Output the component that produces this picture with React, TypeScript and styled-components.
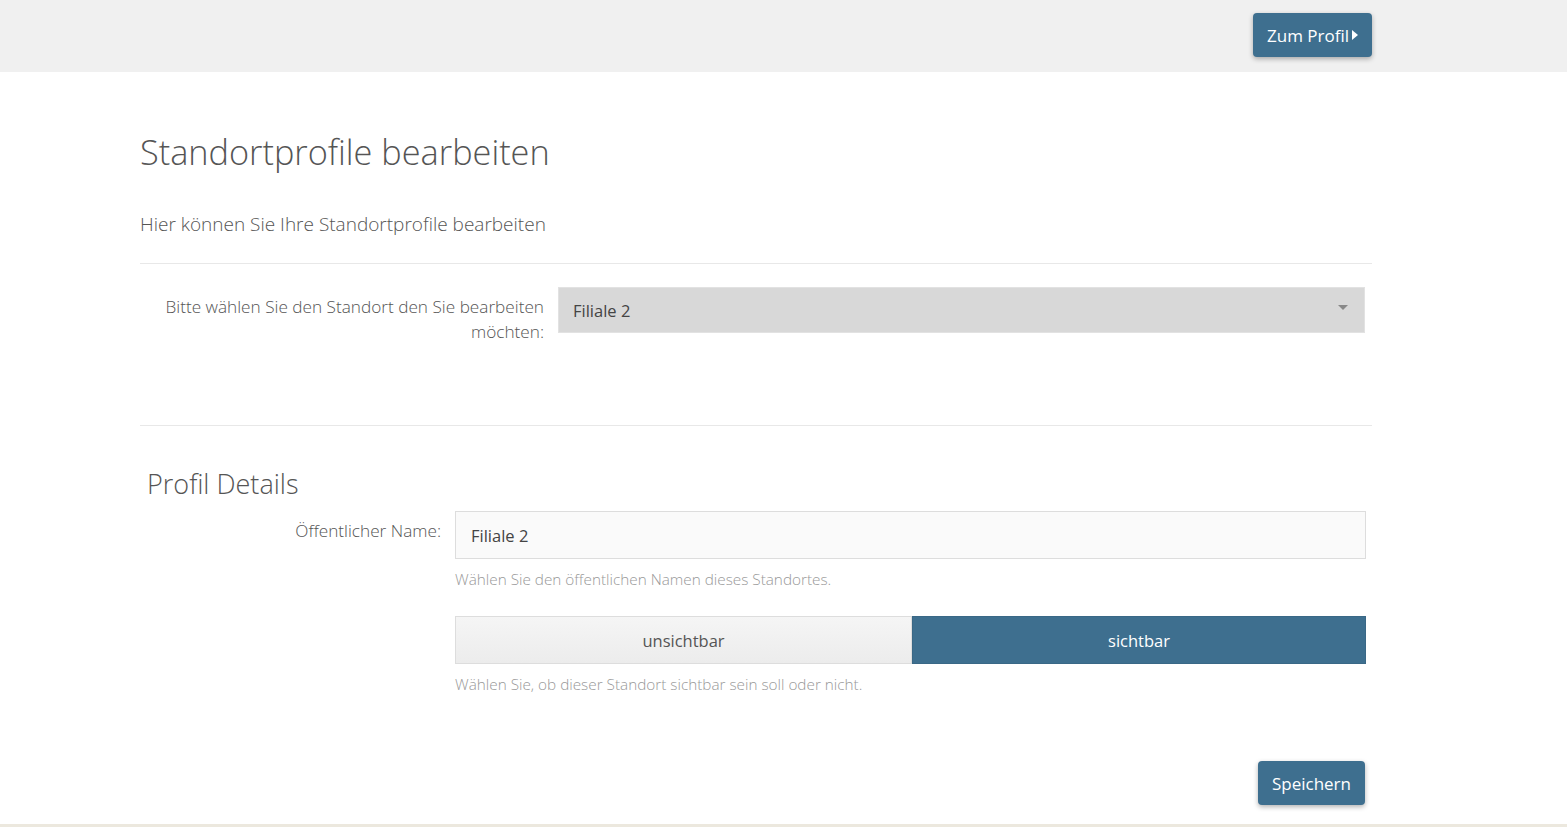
import styled, { createGlobalStyle } from 'styled-components'

const GlobalStyle = createGlobalStyle`
  html, body {
    margin: 0;
    padding: 0;
    background: #fff;
    font-family: "Open Sans", Lato, sans-serif;
    color: #555;
  }
`

const Page = styled.div`
  min-height: 827px;
  display: flex;
  flex-direction: column;
`

const TopBar = styled.header`
  height: 72px;
  box-sizing: border-box;
  background: #f0f0f0;
  display: flex;
  align-items: flex-start;
  justify-content: flex-end;
  padding: 13px 195px 0 0;
`

const PrimaryButton = styled.button`
  background: #3e6f8f;
  color: #fff;
  border: none;
  border-radius: 4px;
  height: 44px;
  padding: 0 14px;
  font-family: inherit;
  font-size: 17px;
  display: flex;
  align-items: center;
  gap: 3px;
  box-shadow: 0 2px 5px rgba(0, 0, 0, 0.3);
  cursor: pointer;
`

const Caret = styled.span`
  width: 0;
  height: 0;
  border-top: 5px solid transparent;
  border-bottom: 5px solid transparent;
  border-left: 6px solid #fff;
`

const Main = styled.main`
  width: 1232px;
  margin: 0 0 0 140px;
  flex: 1;
  display: flex;
  flex-direction: column;
`

const Title = styled.h1`
  font-weight: 300;
  font-size: 34.3px;
  color: #555;
  margin: 58px 0 0;
  line-height: 44px;
`

const Lead = styled.p`
  font-size: 19px;
  font-weight: 300;
  margin: 38px 0 0;
  line-height: 24px;
  color: #555;
`

const Rule = styled.hr<{ $top: number }>`
  border: none;
  border-top: 1px solid #e8e8e8;
  margin: ${(p) => p.$top}px 0 0;
`

const Row = styled.div<{ $label: number; $top: number }>`
  display: grid;
  grid-template-columns: ${(p) => p.$label}px 911px;
  column-gap: 14px;
  margin-top: ${(p) => p.$top}px;
`

const Label = styled.label`
  text-align: right;
  font-size: 17.2px;
  font-weight: 300;
  line-height: 25px;
  color: #555;
  padding-top: 7px;
`

const Select = styled.div`
  width: 807px;
  height: 46px;
  box-sizing: border-box;
  background: #d8d8d8;
  border: 1px solid #e2e2e2;
  display: flex;
  align-items: center;
  justify-content: space-between;
  padding: 0 14px;
  font-size: 16.5px;
  color: #444;
`

const SelectArrow = styled.span`
  width: 0;
  height: 0;
  border-left: 5px solid transparent;
  border-right: 5px solid transparent;
  border-top: 5px solid #888;
  margin-right: 2px;
  margin-top: -6px;
`

const Subtitle = styled.h2`
  font-weight: 300;
  font-size: 27px;
  color: #555;
  margin: 41px 0 0 7px;
  line-height: 34px;
`

const Field = styled.div`
  display: flex;
  flex-direction: column;
`

const Input = styled.input`
  width: 911px;
  height: 48px;
  box-sizing: border-box;
  border: 1px solid #ddd;
  background: #fafafa;
  padding: 0 15px;
  font-family: inherit;
  font-size: 16.5px;
  color: #444;
  outline: none;
`

const Help = styled.div`
  font-size: 15.3px;
  font-weight: 300;
  color: #999;
  margin-top: 11px;
  line-height: 18px;
`

const Toggle = styled.div`
  display: grid;
  grid-template-columns: 457px 454px;
  height: 48px;
  margin-top: 28px;
`

const ToggleOption = styled.div<{ $active?: boolean }>`
  display: flex;
  align-items: center;
  justify-content: center;
  font-size: 16.5px;
  box-sizing: border-box;
  color: ${(p) => (p.$active ? '#fff' : '#555')};
  background: ${(p) => (p.$active ? '#3e6f8f' : 'linear-gradient(#f5f5f5, #ececec)')};
  border: 1px solid ${(p) => (p.$active ? '#3a6886' : '#ddd')};
`

const Actions = styled.div`
  display: flex;
  justify-content: flex-end;
  width: 1225px;
  margin-top: 68px;
`

const Footer = styled.footer`
  height: 3px;
  background: #ece8de;
  margin-top: auto;
`

export default function App() {
  return (
    <Page>
      <GlobalStyle />
      <TopBar>
        <PrimaryButton>
          Zum Profil
          <Caret />
        </PrimaryButton>
      </TopBar>
      <Main>
        <Title>Standortprofile bearbeiten</Title>
        <Lead>Hier können Sie Ihre Standortprofile bearbeiten</Lead>
        <Rule $top={27} />
        <Row $label={404} $top={23}>
          <Label>Bitte wählen Sie den Standort den Sie bearbeiten möchten:</Label>
          <Select>
            Filiale 2
            <SelectArrow />
          </Select>
        </Row>
        <Rule $top={81} />
        <Subtitle>Profil Details</Subtitle>
        <Row $label={301} $top={10}>
          <Label>Öffentlicher Name:</Label>
          <Field>
            <Input defaultValue="Filiale 2" />
            <Help>Wählen Sie den öffentlichen Namen dieses Standortes.</Help>
            <Toggle>
              <ToggleOption>unsichtbar</ToggleOption>
              <ToggleOption $active>sichtbar</ToggleOption>
            </Toggle>
            <Help>Wählen Sie, ob dieser Standort sichtbar sein soll oder nicht.</Help>
          </Field>
        </Row>
        <Actions>
          <PrimaryButton>Speichern</PrimaryButton>
        </Actions>
      </Main>
      <Footer />
    </Page>
  )
}
